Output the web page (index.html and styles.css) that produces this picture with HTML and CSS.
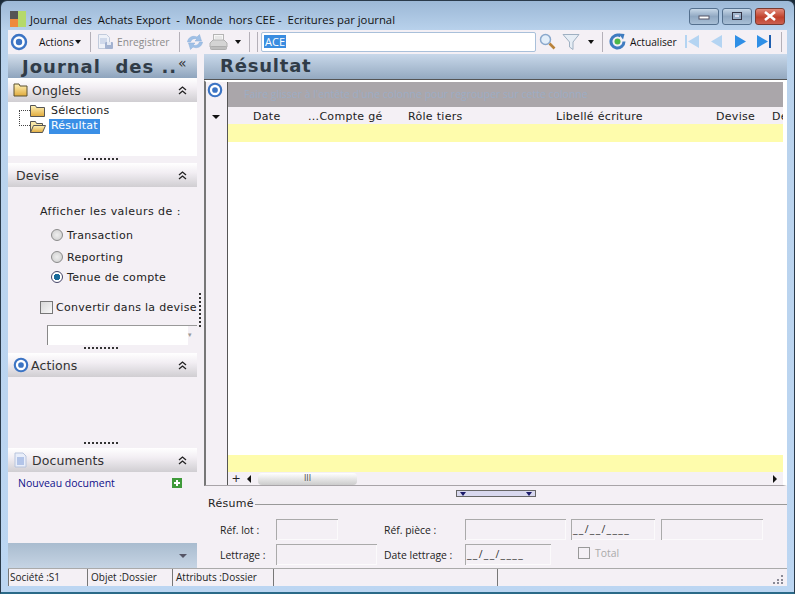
FILE: index.html
```
<!DOCTYPE html>
<html lang="fr">
<head>
<meta charset="utf-8">
<title>Journal des Achats Export</title>
<link rel="stylesheet" href="styles.css">
</head>
<body>
<div class="window">
  <header class="titlebar">
    <svg class="applogo" width="16" height="16" viewBox="0 0 16 16"><rect width="8" height="8" fill="#555"/><rect x="8" width="8" height="16" fill="#b5d96a"/><rect y="8" width="8" height="8" fill="#ee8a3c"/></svg>
    <span class="title">Journal&nbsp; des&nbsp; Achats Export&nbsp; -&nbsp; Monde&nbsp; hors CEE -&nbsp; Ecritures par journal</span>
    <div class="winbtns">
      <span class="winbtn"><svg width="12" height="8"><rect x="1" y="4" width="10" height="3" fill="#fff" stroke="#556"/></svg></span>
      <span class="winbtn"><svg width="12" height="10"><rect x="1.5" y="1.5" width="9" height="7" fill="none" stroke="#334"/><rect x="4" y="4" width="4" height="2" fill="#dde"/></svg></span>
      <span class="winbtn close"><svg width="14" height="10"><path d="M2 1l10 8M12 1L2 9" stroke="#fff" stroke-width="2.6"/></svg></span>
    </div>
  </header>
  <div class="toolbar">
    <svg class="ic-target" width="18" height="18" viewBox="0 0 18 18"><circle cx="9" cy="9" r="7" fill="#fff" stroke="#3c74c4" stroke-width="2.4"/><circle cx="9" cy="9" r="3.2" fill="#3c74c4"/></svg>
    <span class="tb-actions">Actions<i class="caret"></i></span>
    <span class="sep s-a"></span>
    <svg class="ic-save" width="17" height="17" viewBox="0 0 17 17"><path d="M1.500 1.500h8l3 3v11h-11z" fill="#eef1f8" stroke="#c2cbdc"/><path d="M3 6h7M3 8h7M3 10h5" stroke="#b3c2de"/><rect x="8" y="9" width="8" height="7" rx="1" fill="#a3b2d0"/><rect x="10" y="9" width="4" height="3" fill="#e4e9f3"/></svg>
    <span class="tb-save">Enregistrer</span>
    <span class="sep s-b"></span>
    <svg class="ic-sync" width="18" height="18" viewBox="0 0 18 18"><path d="M1.500 9C2 4.500 6.500 2 11 4l2.500-2.500L15.500 8h-6.500l2-2C8 5 5.500 6 4.500 9z" fill="#9fc0e6" stroke="#8aaed8" stroke-width=".5"/><path d="M16.500 9c-.5 4.500-5 7-9.500 5l-2.500 2.500L2.500 10H9l-2 2c3 1 5.500 0 6.500-3z" fill="#9fc0e6" stroke="#8aaed8" stroke-width=".5"/></svg>
    <svg class="ic-print" width="19" height="18" viewBox="0 0 19 18"><rect x="4.500" y="1.500" width="10" height="6" fill="#f6f6f6" stroke="#b5b5b5"/><path d="M4 7h11l3 3v4H1v-4z" fill="#d4d4d4" stroke="#b0b0b0"/><rect x="1.500" y="13.500" width="16" height="3" rx="1" fill="#bdbdbd" stroke="#adadad"/><path d="M6 4h7M6 6h7" stroke="#d8d8d8"/></svg>
    <i class="caret c-print"></i>
    <span class="sep dbl"></span>
    <div class="search"><span class="sel">ACE</span></div>
    <svg class="ic-mag" width="17" height="17" viewBox="0 0 17 17"><circle cx="6.500" cy="6.500" r="5" fill="#e2eefa" stroke="#8aa8cc" stroke-width="1.500"/><path d="M10.500 10.500l5 5" stroke="#b9823a" stroke-width="2.600"/></svg>
    <svg class="ic-filter" width="18" height="18" viewBox="0 0 18 18"><path d="M1 1.500h16L11 9v7.500L7.500 14V9z" fill="#e6edf5" stroke="#9fb0c2"/></svg>
    <i class="caret c-filter"></i>
    <span class="sep s-c"></span>
    <svg class="ic-refresh" width="17" height="17" viewBox="0 0 17 17"><path d="M11.500 2.800A6.500 6.500 0 1 0 15 8.500" fill="none" stroke="#3f7cc0" stroke-width="3"/><path d="M9.500 .5l6 .5-1.500 5.500z" fill="#3f7cc0"/><circle cx="8.500" cy="8.500" r="3" fill="#4db848"/></svg>
    <span class="tb-refresh">Actualiser</span>
    <svg class="nav n1" width="16" height="15" viewBox="0 0 16 15"><rect x="1" y="1" width="2" height="13" fill="#b4d4f2"/><path d="M15 1v13L4 7.500z" fill="#b4d4f2"/></svg>
    <svg class="nav n2" width="13" height="15" viewBox="0 0 13 15"><path d="M12 1v13L1 7.500z" fill="#b4d4f2"/></svg>
    <svg class="nav n3" width="13" height="15" viewBox="0 0 13 15"><path d="M1 1v13l11-6.500z" fill="#2f8fe6"/></svg>
    <svg class="nav n4" width="16" height="15" viewBox="0 0 16 15"><path d="M1 1v13l11-6.500z" fill="#2f8fe6"/><rect x="13" y="1" width="2" height="13" fill="#1f5fb0"/></svg>
    <span class="sep s-d"></span>
  </div>
  <div class="main">
    <aside class="side">
      <div class="side-head"><span>Journal&nbsp; des ..</span><b class="collapse">«</b></div>
      <section class="panel">
        <div class="p-head top">
          <svg class="p-ic" width="15" height="14" viewBox="0 0 15 14"><defs><linearGradient id="fg" x1="0" y1="0" x2="0" y2="1"><stop offset="0" stop-color="#fff2b8"/><stop offset="1" stop-color="#e0aa3c"/></linearGradient></defs><path d="M1 13V1h5l1 2h7v10z" fill="url(#fg)" stroke="#5a5030"/></svg>
          <span>Onglets</span><svg class="chev" width="9" height="9" viewBox="0 0 9 9"><path d="M1 4l3.500-3L8 4M1 8l3.500-3L8 8" fill="none" stroke="#222" stroke-width="1.300"/></svg>
        </div>
        <div class="p-tree">
          <div class="node"><svg width="20" height="13" viewBox="0 0 20 13"><path d="M3.500 12.500v-11h5l1 2h8v9z" fill="url(#fg)" stroke="#555"/></svg><span class="lbl">Sélections</span></div>
          <div class="node"><svg width="20" height="13" viewBox="0 0 20 13"><path d="M3.500 12.500v-11h5l1 2h6v2" fill="#f8e7a6" stroke="#555"/><path d="M3.500 12.500l3-7h12l-3 7z" fill="url(#fg)" stroke="#555"/></svg><span class="selnode">Résultat</span></div>
          <span class="tree-line"></span>
        </div>
        <div class="grip"></div>
      </section>
      <section class="panel devise">
        <div class="p-head plain"><span>Devise</span><svg class="chev" width="9" height="9" viewBox="0 0 9 9"><path d="M1 4l3.500-3L8 4M1 8l3.500-3L8 8" fill="none" stroke="#222" stroke-width="1.300"/></svg></div>
        <div class="p-body">
          <div class="lbl-show">Afficher les valeurs de :</div>
          <label class="radio r1"><i class="dot"></i>Transaction</label>
          <label class="radio r2"><i class="dot"></i>Reporting</label>
          <label class="radio r3"><i class="dot on"></i>Tenue de compte</label>
          <label class="conv"><i class="box"></i>Convertir dans la devise</label>
          <div class="combo"><span class="combo-btn">▾</span></div>
        </div>
        <div class="grip"></div>
      </section>
      <section class="panel actions">
        <div class="p-head">
          <svg class="p-ic" width="16" height="16" viewBox="0 0 18 18"><circle cx="9" cy="9" r="7" fill="#fff" stroke="#3c74c4" stroke-width="2.400"/><circle cx="9" cy="9" r="3.200" fill="#3c74c4"/></svg>
          <span>Actions</span><svg class="chev" width="9" height="9" viewBox="0 0 9 9"><path d="M1 4l3.500-3L8 4M1 8l3.500-3L8 8" fill="none" stroke="#222" stroke-width="1.300"/></svg>
        </div>
        <div class="spacer"></div>
        <div class="grip"></div>
      </section>
      <section class="panel docs">
        <div class="p-head">
          <svg class="p-ic doc-ic" width="15" height="16" viewBox="0 0 15 16"><path d="M2 1h8l3 3v11H2z" fill="#e9eefa" stroke="#b8c4dc"/><path d="M4 6h7M4 8h7M4 10h7M4 12h7" stroke="#7d9ad6"/></svg>
          <span>Documents</span><svg class="chev" width="9" height="9" viewBox="0 0 9 9"><path d="M1 4l3.500-3L8 4M1 8l3.500-3L8 8" fill="none" stroke="#222" stroke-width="1.300"/></svg>
        </div>
        <div class="doc-link"><a>Nouveau document</a><svg width="10" height="10" viewBox="0 0 10 10"><rect width="10" height="10" fill="#3f9a3a"/><path d="M5 2v6M2 5h6" stroke="#fff" stroke-width="2"/></svg></div>
      </section>
      <div class="side-foot"><i class="foot-caret"></i></div>
    </aside>
    <div class="splitter"></div>
    <main class="content">
      <div class="res-head">Résultat</div>
      <div class="gridbox">
        <div class="gutter">
          <svg class="g-target" width="16" height="16" viewBox="0 0 18 18"><circle cx="9" cy="9" r="7" fill="#fff" stroke="#3c74c4" stroke-width="2.400"/><circle cx="9" cy="9" r="3.200" fill="#3c74c4"/></svg>
          <i class="g-caret"></i>
        </div>
        <div class="grid">
          <div class="grouping">Faire glisser à l'entête d'une colonne pour regrouper sur cette colonne</div>
          <div class="cols"><span class="c1">Date</span><span class="c2">...Compte gé</span><span class="c3">Rôle tiers</span><span class="c4">Libellé écriture</span><span class="c5">Devise</span><span class="c6">De</span></div>
          <div class="yellow y1"></div>
          <div class="rows"></div>
          <div class="yellow"></div>
          <div class="hscroll"><span class="plus">+</span><i class="arr-l"></i><span class="thumb">III</span><i class="arr-r"></i></div>
        </div>
      </div>
      <div class="split-h"><span class="handle"><i></i><i></i></span></div>
      <section class="resume">
        <div class="legend">Résumé</div>
        <div class="form-row">
          <span class="f-l l1">Réf. lot :</span><span class="inp w62"></span>
          <span class="f-l gapl">Réf. pièce :</span><span class="inp w101"></span><span class="inp w84 ml5">__/__/____</span><span class="inp w102 ml6"></span>
        </div>
        <div class="form-row">
          <span class="f-l l1">Lettrage :</span><span class="inp w101"></span>
          <span class="f-l gapl2">Date lettrage :</span><span class="inp w86">__/__/____</span>
          <label class="total"><i class="box"></i>Total</label>
        </div>
      </section>
    </main>
  </div>
  <footer class="status">
    <span class="st s1">Société :S1</span><span class="st s2">Objet :Dossier</span><span class="st s3">Attributs :Dossier</span><span class="st s4"></span><span class="st s5"><svg class="resize" width="12" height="10" viewBox="0 0 12 10"><path d="M9 1h2v2H9zM5 5h2v2H5zM9 5h2v2H9zM1 8h2v2H1zM5 8h2v2H5zM9 8h2v2H9z" fill="#8a8a96"/></svg></span>
  </footer>
</div>
</body>
</html>
```

FILE: styles.css
```
* { box-sizing: border-box; }
html, body { margin: 0; height: 100%; background: #1a2a38; }
body { font-family: "DejaVu Sans", sans-serif; font-size: 11px; color: #222; overflow: hidden; }
.window { width: 795px; height: 594px; display: flex; flex-direction: column; border-radius: 7px 7px 0 0; border: 1px solid #2a3a4a; border-bottom: 2px solid #2b6a88; padding: 0 7px 6px 7px; background: linear-gradient(#9cb8d6 0, #b9d2ec 30px, #bcd6f2 100%); }
.titlebar { height: 29px; flex: none; display: flex; align-items: center; padding: 7px 0 0 2px; }
.applogo { margin-right: 4px; }
.title { font-family: "Open Sans", sans-serif; font-size: 11.300px; color: #111; white-space: nowrap; }
.winbtns { margin-left: auto; display: flex; gap: 3px; margin-top: -6px; margin-right: 2px; }
.winbtn { width: 30px; height: 17px; border: 1px solid #54708e; border-radius: 3px; background: linear-gradient(#c8d8e8, #90a8c2 50%, #a8bfd6); display: flex; align-items: center; justify-content: center; }
.winbtn.close { background: linear-gradient(#e28a7a, #c0402a 55%, #cc6050); border-color: #7a3a30; }

.toolbar { height: 23px; flex: none; display: flex; align-items: center; background: #f4f0f5; }
.ic-target { margin-left: 2px; flex: none; }
.toolbar svg { flex: none; }
.tb-actions { font-family: "Open Sans", sans-serif; font-size: 10.200px; margin-left: 11px; color: #111; display: flex; align-items: center; width: 45px; flex: none; }
.caret { display: inline-block; flex: none; width: 0; height: 0; border: 3.500px solid transparent; border-top: 4px solid #111; border-bottom: 0; margin-left: 1px; }
.c-print { margin-left: 7px; }
.c-filter { margin-left: 8px; }
.sep { width: 1px; height: 20px; background: #b4b0b8; flex: none; }
.s-a { margin: 0 5px 0 6px; }
.s-b { margin: 0 6px 0 9px; }
.s-c { margin: 0 6px 0 8px; }
.s-d { margin-left: 9px; }
.sep.dbl { margin: 0 11px 0 8px; box-shadow: 8px 0 0 #b4b0b8; }
.ic-save { margin-left: 1px; }
.tb-save { font-family: "Open Sans", sans-serif; font-size: 10.200px; color: #8a8a8a; margin-left: 3px; width: 53px; flex: none; white-space: nowrap; }
.ic-print { margin-left: 5px; }
.search { width: 275px; height: 20px; flex: none; background: #fff; border: 1px solid #a9c0da; border-radius: 2px; padding: 1px 2px; font-family: "Open Sans", sans-serif; font-size: 11px; }
.sel { background: #3a8de0; color: #fff; display: inline-block; line-height: 13px; padding: 0 1px; }
.ic-mag { margin-left: 3px; }
.ic-filter { margin-left: 6px; }
.tb-refresh { font-family: "Open Sans", sans-serif; font-size: 10.200px; color: #111; margin-left: 4px; width: 46px; flex: none; white-space: nowrap; }
.n1 { margin-left: 8px; }
.n2 { margin-left: 10px; }
.n3 { margin-left: 11px; }
.n4 { margin-left: 9px; }

.main { flex: 1; display: flex; min-height: 0; background: #f4f0f5; padding-top: 1px; }
.side { width: 189px; flex: none; display: flex; flex-direction: column; }
.side-head { height: 24px; flex: none; display: flex; align-items: center; padding-left: 14px; position: relative; background: linear-gradient(#d4dfec, #8ea4bd); font-weight: bold; font-size: 18px; letter-spacing: 1px; color: #303c48; white-space: nowrap; }
.collapse { position: absolute; left: 170px; top: 1px; font-weight: normal; font-size: 14px; letter-spacing: 0; color: #333; }
.panel { display: flex; flex-direction: column; }
.p-head { height: 24px; flex: none; display: flex; align-items: center; padding: 0 10px 0 5px; background: linear-gradient(#fff, #f2eef3 40%, #d0ced2); font-size: 12.500px; color: #333; letter-spacing: .1px; }
.p-head.plain { padding-left: 8px; }
.p-head .chev { margin-left: auto; }
.p-ic { margin-right: 4px; flex: none; }
.actions .p-ic { margin-right: 2px; }
.p-tree { height: 54px; background: #fff; padding: 0 0 0 19px; position: relative; }
.node { display: flex; align-items: center; height: 16px; gap: 2px; font-size: 11px; letter-spacing: .2px; position: relative; }
.lbl { padding-left: 2px; }
.selnode { background: #3a8fe6; color: #fff; padding: 0 2px; height: 15px; line-height: 14px; }
.tree-line { position: absolute; left: 11px; top: 8px; width: 11px; height: 16px; border-left: 1px dotted #444; border-bottom: 1px dotted #444; border-top: 1px dotted #444; }
.grip { height: 7px; flex: none; display: flex; justify-content: center; padding-top: 2px; }
.grip::before { content: ""; width: 34px; height: 2px; border-top: 2px dotted #333; margin-left: -4px; }
.panel.devise .grip { height: 8px; }
.panel.actions .grip { height: 8px; }
.panel.devise .p-body { height: 158px; padding-top: 18px; font-size: 11px; letter-spacing: .3px; }
.lbl-show { margin-left: 32px; letter-spacing: .45px; }
.radio { display: flex; align-items: center; gap: 4px; margin-left: 43px; height: 16px; }
.r1 { margin-top: 9px; }
.r2 { margin-top: 6px; }
.r3 { margin-top: 4px; }
.dot { width: 12px; height: 12px; border-radius: 50%; border: 1px solid #8a8a8a; background: radial-gradient(#eee, #ccc); display: inline-block; }
.dot.on { background: radial-gradient(circle at 50% 50%, #1a6a9a 0 3px, #fff 3.500px); border-color: #446; }
.conv { display: flex; align-items: center; gap: 3px; margin: 14px 0 0 32px; height: 16px; white-space: nowrap; }
.box { width: 13px; height: 13px; border: 1px solid #777; background: linear-gradient(135deg, #d8d8d8, #f8f8f8); display: inline-block; flex: none; }
.combo { margin: 10px 0 0 39px; height: 20px; background: #fff; border-left: 1px solid #888; border-top: 1px solid #999; position: relative; }
.combo-btn { position: absolute; right: 0; top: 0; width: 9px; height: 19px; background: #f4f0f5; color: #999; font-size: 7px; line-height: 19px; }
.actions .spacer { height: 63px; }
.docs .doc-link { height: 71px; padding: 4px 10px 0 10px; display: flex; align-items: flex-start; justify-content: space-between; font-family: "Open Sans", sans-serif; font-size: 10.500px; color: #10108a; }
.docs .doc-link svg { margin: 2px 5px 0 0; }
.side-foot { height: 25px; flex: none; background: linear-gradient(#a9bccf, #c6d4e4); position: relative; }
.foot-caret { position: absolute; right: 10px; top: 11px; width: 0; height: 0; border: 4px solid transparent; border-top: 4px solid #556; border-bottom: 0; }
.splitter { width: 7px; flex: none; }
.splitter::before { content: ""; display: block; margin: 239px 0 0 2px; height: 34px; width: 0; border-left: 2px dotted #333; }
.content { flex: 1; min-width: 0; display: flex; flex-direction: column; }
.res-head { height: 26px; flex: none; background: linear-gradient(#c8d8ea, #94a9c0); font-weight: bold; font-size: 18px; letter-spacing: .8px; color: #303c48; padding: 0 0 0 16px; line-height: 24px; border-bottom: 1px solid #555; }
.gridbox { height: 406px; flex: none; display: flex; border-left: 2px solid #777; border-bottom: 1px solid #a8a4a8; background: #f4f0f5; border-top: 2px solid #fff; border-right: 4px solid #fff; }
.gutter { width: 22px; flex: none; border-right: 1px solid #555; position: relative; }
.g-target { position: absolute; left: 1px; top: 0; }
.g-caret { position: absolute; left: 6px; top: 33px; width: 0; height: 0; border: 4px solid transparent; border-top: 4px solid #111; border-bottom: 0; }
.grid { flex: 1; min-width: 0; display: flex; flex-direction: column; overflow: hidden; }
.grouping { height: 25px; flex: none; background: #aaa6aa; color: #9cacc4; padding: 5px 0 0 16px; font-family: "Open Sans", sans-serif; font-size: 10.500px; white-space: nowrap; overflow: hidden; }
.cols { height: 17px; flex: none; position: relative; font-size: 11px; letter-spacing: .3px; overflow: hidden; }
.cols span { position: absolute; top: 3px; white-space: nowrap; }
.c1 { left: 25px; } .c2 { left: 80px; } .c3 { left: 180px; } .c4 { left: 328px; } .c5 { left: 488px; } .c6 { left: 544px; }
.yellow { height: 17px; flex: none; background: #fefcac; }
.y1 { height: 18px; }
.rows { flex: 1; background: #fff; }
.hscroll { height: 13px; flex: none; display: flex; align-items: center; position: relative; }
.plus { width: 16px; text-align: center; font-size: 11px; }
.arr-l { width: 0; height: 0; border: 4px solid transparent; border-right: 4px solid #111; border-left: 0; margin-left: 3px; }
.thumb { width: 99px; margin-left: 7px; height: 12px; background: linear-gradient(#fff, #ccc); font-size: 8px; text-align: center; line-height: 11px; border-radius: 4px; color: #555; }
.arr-r { position: absolute; right: 6px; top: 3px; width: 0; height: 0; border: 4px solid transparent; border-left: 4px solid #111; border-right: 0; }
.split-h { height: 11px; flex: none; display: flex; justify-content: center; padding-top: 4px; }
.handle { width: 80px; height: 7px; border: 1px solid #666; background: #d8d8ee; display: flex; justify-content: space-between; padding: 1px 3px; }
.handle i { width: 0; height: 0; border: 3px solid transparent; border-top: 4px solid #1a1a6a; border-bottom: 0; }
.resume { flex: 1; min-width: 0; display: flex; flex-direction: column; gap: 4px; padding-left: 16px; }
.legend { height: 14px; margin: 0 0 4px -12px; display: flex; align-items: center; font-size: 11px; letter-spacing: .3px; line-height: 14px; }
.legend::after { content: ""; flex: 1; border-top: 1px solid #999; margin-left: 1px; }
.form-row { display: flex; align-items: center; height: 21px; font-family: "Open Sans", sans-serif; font-size: 10.400px; }
.f-l { flex: none; }
.l1 { width: 56px; }
.gapl { margin-left: 46px; width: 81px; }
.gapl2 { margin-left: 7px; width: 81px; }
.inp { height: 21px; border-top: 1px solid #aaa; border-left: 1px solid #aaa; box-shadow: inset -1px -1px 0 #fbfafb; flex: none; font-size: 10.400px; letter-spacing: 1.300px; line-height: 19px; padding-left: 1px; display: inline-block; color: #333; }
.w62 { width: 62px; } .w101 { width: 101px; } .w102 { width: 102px; } .w84 { width: 84px; } .w86 { width: 86px; }
.ml5 { margin-left: 5px; } .ml6 { margin-left: 6px; }
.total { display: flex; align-items: center; gap: 5px; margin-left: 27px; color: #aaa; margin-top: -4px; }
.total .box { border-color: #999; background: #f4f0f5; width: 12px; height: 12px; }
.status { height: 18px; flex: none; display: flex; background: #f4f0f5; border-top: 1px solid #aaa; font-family: "Open Sans", sans-serif; font-size: 10px; }
.st { border-right: 1px solid #777; padding-left: 3px; line-height: 16px; white-space: nowrap; }
.s1 { width: 80px; border-left: 1px solid #777; padding-left: 1px; } .s2 { width: 85px; } .s3 { width: 101px; } .s4 { width: 224px; } .s5 { flex: 1; border-right: 0; display: flex; justify-content: flex-end; align-items: flex-end; padding-right: 3px; padding-bottom: 2px; }
```
